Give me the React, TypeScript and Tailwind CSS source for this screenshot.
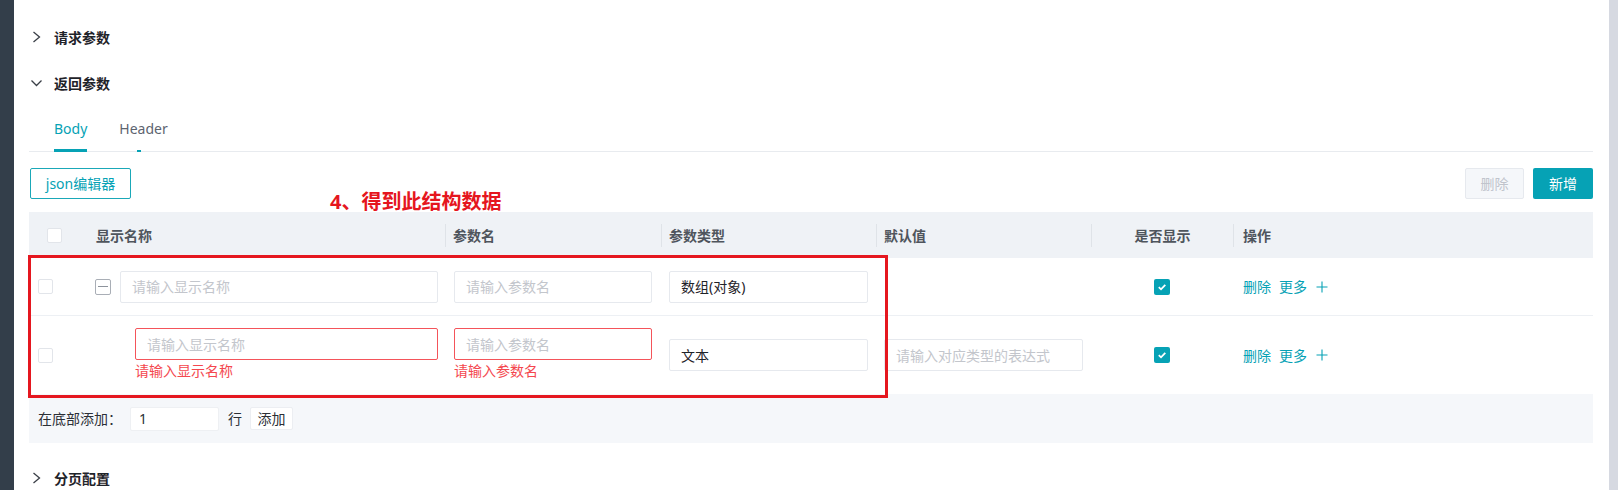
import type { ReactNode } from "react";

const TEAL = "#06a2b5";

const cols = "grid grid-cols-[58px_358px_216px_215px_215px_142px_1fr]";

function Chevron({ open }: { open?: boolean }) {
  return (
    <svg width="12" height="12" viewBox="0 0 12 12" className="shrink-0">
      {open ? (
        <path d="M0.5 3.5L5.5 8.5L10.5 3.5" fill="none" stroke="#3a3f47" strokeWidth="1.3" />
      ) : (
        <path d="M2.5 1L8.5 6L2.5 11" fill="none" stroke="#3a3f47" strokeWidth="1.3" />
      )}
    </svg>
  );
}

function Section({ title, open }: { title: string; open?: boolean }) {
  return (
    <div className="flex h-[46px] items-center pl-[2px]">
      <Chevron open={open} />
      <span className="ml-[11px] text-[14px] font-bold text-[#1f2329]">{title}</span>
    </div>
  );
}

function Box({ checked }: { checked?: boolean }) {
  if (checked)
    return (
      <span className="flex h-[16px] w-[16px] items-center justify-center rounded-[2px] bg-[#06a2b5]">
        <svg width="10" height="10" viewBox="0 0 10 10">
          <path d="M1.8 5.2L4 7.3L8.3 2.8" fill="none" stroke="#fff" strokeWidth="1.8" />
        </svg>
      </span>
    );
  return <span className="block h-[15px] w-[15px] rounded-[2px] border border-[#e2e5ea] bg-white" />;
}

function Field({ value, placeholder, error }: { value?: string; placeholder?: string; error?: boolean }) {
  return (
    <div
      className={
        "flex h-[32px] w-full items-center rounded-[2px] border bg-white px-[11px] text-[14px] " +
        (error ? "border-[#f4545a]" : "border-[#e6e9ee]")
      }
    >
      {value ? (
        <span className="text-[#1f2329]">{value}</span>
      ) : (
        <span className="text-[#c3c6cc]">{placeholder}</span>
      )}
    </div>
  );
}

function WithError({ placeholder, message }: { placeholder: string; message: string }) {
  return (
    <div className="flex w-full flex-col">
      <Field placeholder={placeholder} error />
      <span className="h-[22px] text-[14px] leading-[22px] text-[#f4474e]">{message}</span>
    </div>
  );
}

function Head({ children, divider, className = "" }: { children?: ReactNode; divider?: boolean; className?: string }) {
  return (
    <div className="flex items-center">
      {divider && <span className="h-[23px] w-px shrink-0 bg-[#dfe3e8]" />}
      <div className={"flex-1 " + className}>{children}</div>
    </div>
  );
}

function Actions() {
  return (
    <div className="flex items-center pl-[10px] text-[14px] text-[#06a2b5]">
      <span>删除</span>
      <span className="ml-[8px]">更多</span>
      <svg width="12" height="12" viewBox="0 0 12 12" className="ml-[9px]">
        <path d="M6 0.5V11.5M0.5 6H11.5" stroke={TEAL} strokeWidth="1.1" />
      </svg>
    </div>
  );
}

function CollapseIcon() {
  return (
    <span className="flex h-[16px] w-[16px] shrink-0 items-center justify-center rounded-[2px] border border-[#a9aeb6]">
      <span className="h-px w-[10px] bg-[#8d939c]" />
    </span>
  );
}

function ParamTable() {
  return (
    <div className="relative mt-[13px]">
      {/* 标注 */}
      <div className="absolute left-[301px] top-[-24px] text-[20px] font-bold leading-[28px] text-[#e5161e]">
        4、得到此结构数据
      </div>

      <div className={cols + " h-[46px] bg-[#eff2f6] text-[14px] font-semibold text-[#4f555d]"}>
        <div className="flex items-center pl-[18px]">
          <Box />
        </div>
        <Head className="pl-[9px]">显示名称</Head>
        <Head divider className="pl-[7px]">参数名</Head>
        <Head divider className="pl-[7px]">参数类型</Head>
        <Head divider className="pl-[7px]">默认值</Head>
        <Head divider className="text-center">是否显示</Head>
        <Head divider className="pl-[9px]">操作</Head>
      </div>

      <div className={cols + " h-[58px] border-b border-[#edf0f4]"}>
        <div className="flex items-center pl-[9px]">
          <Box />
        </div>
        <div className="flex items-center pl-[8px] pr-[7px]">
          <CollapseIcon />
          <div className="ml-[9px] flex-1">
            <Field placeholder="请输入显示名称" />
          </div>
        </div>
        <div className="flex items-center px-[9px]">
          <Field placeholder="请输入参数名" />
        </div>
        <div className="flex items-center px-[8px]">
          <Field value="数组(对象)" />
        </div>
        <div />
        <div className="flex items-center justify-center">
          <Box checked />
        </div>
        <Actions />
      </div>

      <div className={cols + " h-[78px]"}>
        <div className="flex items-center pl-[9px]">
          <Box />
        </div>
        <div className="flex items-center pl-[48px] pr-[7px]">
          <WithError placeholder="请输入显示名称" message="请输入显示名称" />
        </div>
        <div className="flex items-center px-[9px]">
          <WithError placeholder="请输入参数名" message="请输入参数名" />
        </div>
        <div className="flex items-center px-[8px]">
          <Field value="文本" />
        </div>
        <div className="flex items-center px-[8px]">
          <Field placeholder="请输入对应类型的表达式" />
        </div>
        <div className="flex items-center justify-center">
          <Box checked />
        </div>
        <Actions />
      </div>

      <div className="flex h-[49px] items-center bg-[#f5f7fa] pl-[9px] text-[14px] text-[#2b2f36]">
        <span className="w-[92px]">在底部添加：</span>
        <span className="flex h-[24px] w-[89px] items-center rounded-[2px] border border-[#eef0f3] bg-white pl-[8px]">
          1
        </span>
        <span className="ml-[9px]">行</span>
        <span className="ml-[8px] flex h-[23px] w-[43px] items-center justify-center rounded-[2px] border border-[#eceef2] bg-white">
          添加
        </span>
      </div>

      {/* 标注框 */}
      <div className="pointer-events-none absolute left-[-1px] top-[43px] h-[143px] w-[860px] border-[3px] border-[#e5171f]" />
    </div>
  );
}

export default function App() {
  return (
    <div className="flex h-[490px] w-[1618px] overflow-hidden bg-white font-['Noto_Sans','Noto_Sans_CJK_SC',sans-serif] text-[#303133]">
      <aside className="w-[14px] shrink-0 bg-[#333e4a]" />
      <main className="min-w-0 flex-1 pl-[15px] pr-[16px] pt-[14px]">
        <Section title="请求参数" />
        <Section title="返回参数" open />

        <div className="flex h-[46px] border-b border-[#e8ebef] pl-[25px] text-[14px]">
          <div className="relative flex items-center text-[#06a2b5]">
            Body
            <span className="absolute bottom-[-1px] left-0 right-0 h-[3px] bg-[#06a2b5]" />
          </div>
          <div className="relative ml-[32px] flex items-center text-[#5d6470]">
            Header
            <span className="absolute bottom-[-1px] left-[18px] h-[2px] w-[4px] bg-[#06a2b5]" />
          </div>
        </div>

        <div className="mt-[16px] flex items-center justify-between">
          <button className="ml-[1px] h-[31px] w-[101px] rounded-[2px] border border-[#1aa8b8] text-[14px] text-[#06a2b5]">
            json编辑器
          </button>
          <div className="flex gap-[9px]">
            <button className="h-[31px] w-[59px] rounded-[2px] border border-[#e6e9ee] bg-[#f5f7fa] text-[14px] text-[#c0c4cc]">
              删除
            </button>
            <button className="h-[31px] w-[60px] rounded-[2px] bg-[#06a2b5] text-[14px] text-white">新增</button>
          </div>
        </div>

        <ParamTable />

        <div className="mt-[12px]">
          <Section title="分页配置" />
        </div>
      </main>
      <div className="w-[9px] shrink-0 bg-[#d6d9e1]" />
    </div>
  );
}
